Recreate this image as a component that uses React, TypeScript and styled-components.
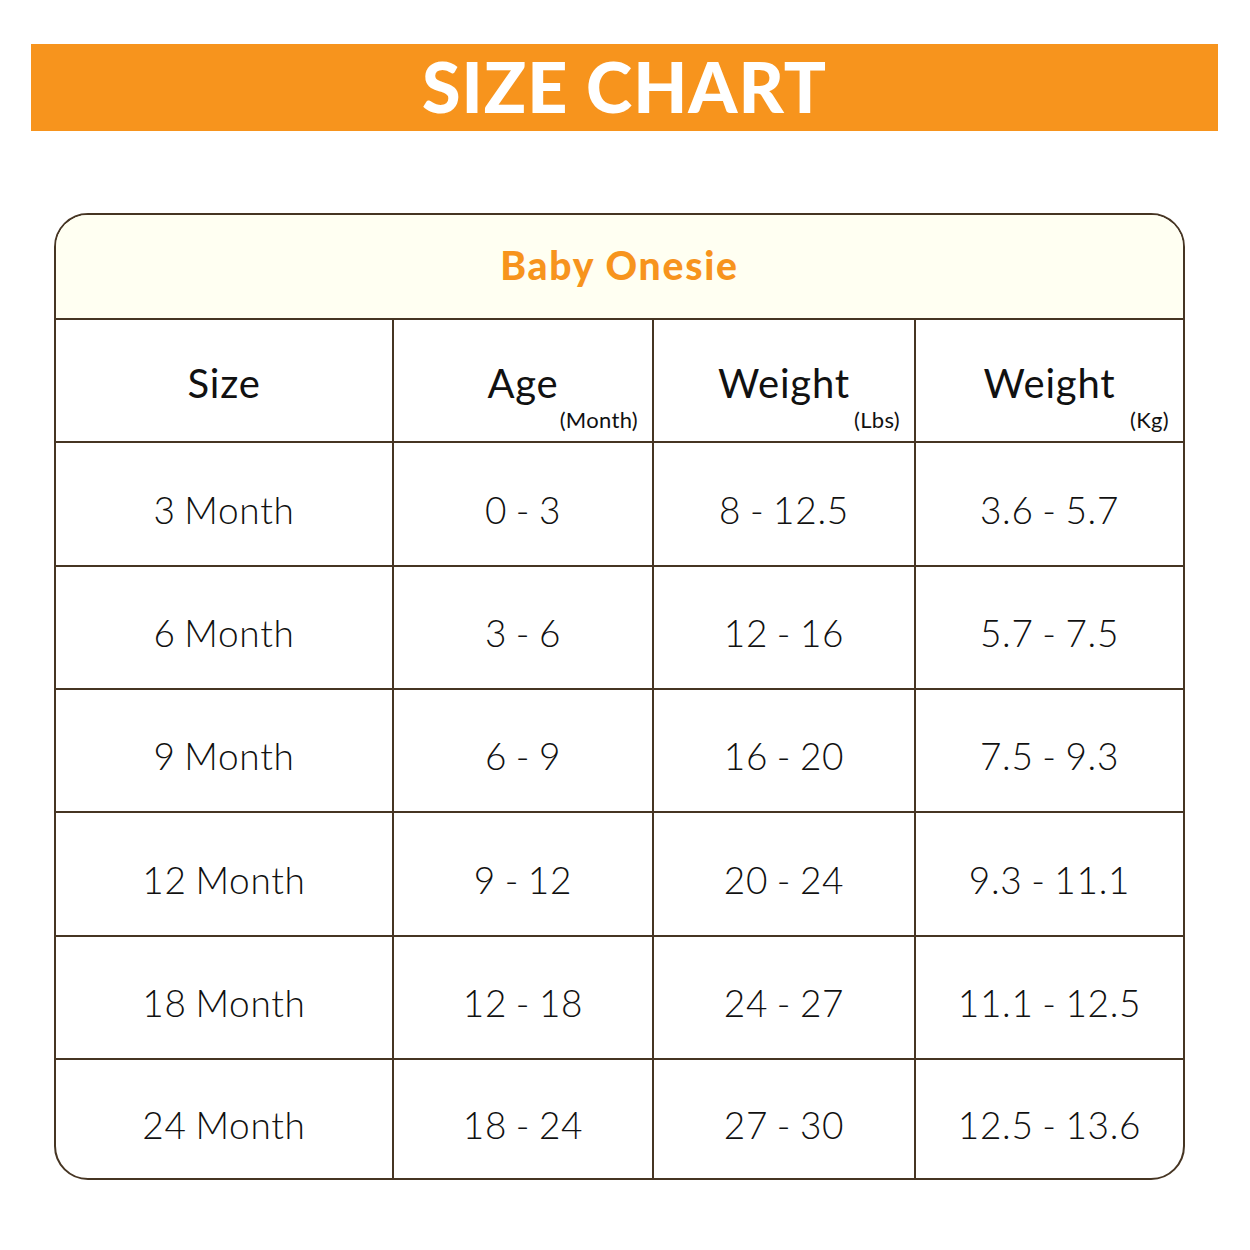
import styled, { createGlobalStyle } from "styled-components";

const GlobalStyle = createGlobalStyle`
  body {
    margin: 0;
    background: #ffffff;
    font-family: Lato, "Liberation Sans", sans-serif;
  }
`;

const Page = styled.div`
  width: 1250px;
  height: 1250px;
  padding-top: 44px;
  box-sizing: border-box;
`;

const Banner = styled.div`
  margin: 0 32px 0 31px;
  height: 87px;
  background: #f7941d;
  display: flex;
  align-items: center;
  justify-content: center;
  padding-bottom: 4px;
  box-sizing: border-box;
`;

const BannerTitle = styled.h1`
  margin: 0;
  color: #ffffff;
  font-family: Lato, sans-serif;
  font-weight: 900;
  font-size: 70px;
  letter-spacing: 1px;
  line-height: 1;
`;

const Card = styled.div`
  margin: 82px 0 0 54px;
  width: 1131px;
  border: 2px solid #463523;
  border-radius: 34px;
  overflow: hidden;
  box-sizing: border-box;
`;

const CardTitle = styled.div`
  height: 105px;
  background: #fffff2;
  border-bottom: 2px solid #463523;
  display: flex;
  align-items: center;
  justify-content: center;
  padding-bottom: 4px;
  box-sizing: border-box;
  color: #f7941d;
  font-weight: 900;
  font-size: 39px;
  letter-spacing: 1.8px;
`;

const Grid = styled.div`
  display: grid;
  grid-template-columns: 338px 260px 262px 1fr;
`;

const Cell = styled.div<{ $h: number; $last?: boolean; $bottom?: boolean }>`
  position: relative;
  height: ${(p) => p.$h}px;
  box-sizing: border-box;
  border-right: ${(p) => (p.$last ? "none" : "2px solid #463523")};
  border-bottom: ${(p) => (p.$bottom ? "none" : "2px solid #463523")};
  display: flex;
  align-items: center;
  justify-content: center;
  padding-top: 10px;
  color: #111111;
  font-weight: 300;
  font-size: 37px;
  letter-spacing: 0.7px;
  word-spacing: -2px;
`;

const HeadCell = styled(Cell)`
  font-weight: 400;
  font-size: 40px;
  letter-spacing: 0.8px;
  padding-top: 4px;
  padding-bottom: 0;
`;

const Unit = styled.span`
  position: absolute;
  right: 14px;
  bottom: 8px;
  font-size: 22px;
  font-weight: 400;
  letter-spacing: 0.3px;
`;

const heads = [
  { label: "Size" },
  { label: "Age", unit: "(Month)" },
  { label: "Weight", unit: "(Lbs)" },
  { label: "Weight", unit: "(Kg)" },
];

const rows = [
  ["3 Month", "0 - 3", "8 - 12.5", "3.6 - 5.7"],
  ["6 Month", "3 - 6", "12 - 16", "5.7 - 7.5"],
  ["9 Month", "6 - 9", "16 - 20", "7.5 - 9.3"],
  ["12 Month", "9 - 12", "20 - 24", "9.3 - 11.1"],
  ["18 Month", "12 - 18", "24 - 27", "11.1 - 12.5"],
  ["24 Month", "18 - 24", "27 - 30", "12.5 - 13.6"],
];

const rowHeights = [124, 123, 123, 124, 123, 118];

export default function App() {
  return (
    <Page>
      <GlobalStyle />
      <Banner>
        <BannerTitle>SIZE CHART</BannerTitle>
      </Banner>
      <Card>
        <CardTitle>Baby Onesie</CardTitle>
        <Grid>
          {heads.map((h, i) => (
            <HeadCell key={i} $h={123} $last={i === 3}>
              {h.label}
              {h.unit && <Unit>{h.unit}</Unit>}
            </HeadCell>
          ))}
          {rows.map((r, ri) =>
            r.map((v, ci) => (
              <Cell
                key={`${ri}-${ci}`}
                $h={rowHeights[ri]}
                $last={ci === 3}
                $bottom={ri === rows.length - 1}
              >
                {v}
              </Cell>
            ))
          )}
        </Grid>
      </Card>
    </Page>
  );
}
